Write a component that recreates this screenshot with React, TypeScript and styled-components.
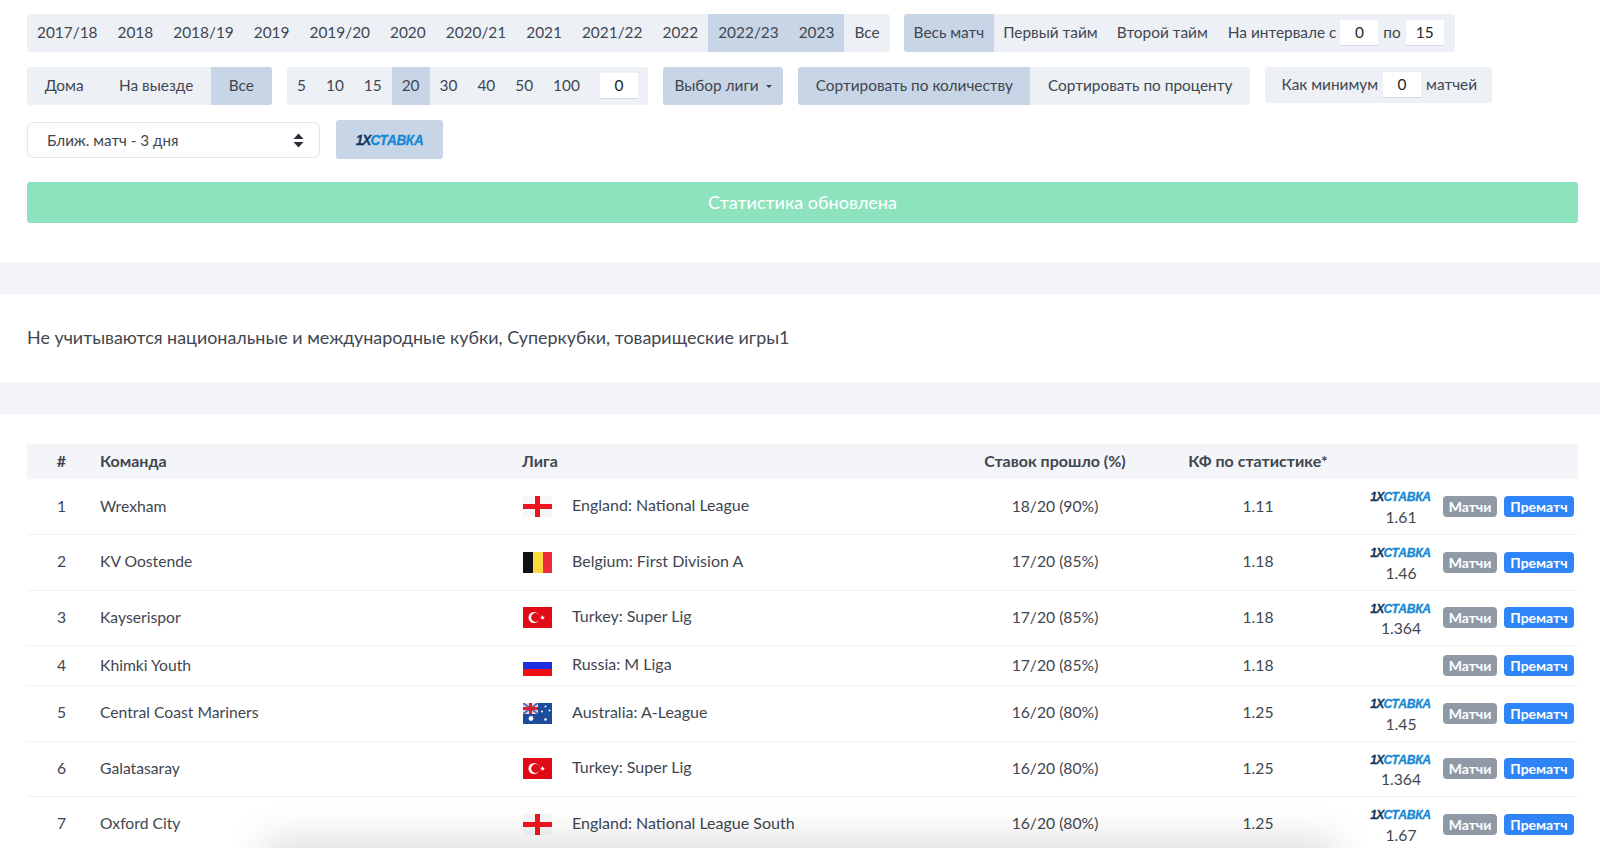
import React from 'react';
import styled, { createGlobalStyle } from 'styled-components';

const Global = createGlobalStyle`
  html, body {
    margin: 0;
    height: 848px;
    overflow: hidden;
    background: #fff;
  }
  body {
    font-family: Lato, "Noto Sans", sans-serif;
    font-size: 15.4px;
    color: #3f4650;
  }
`;

const Page = styled.div`
  padding: 14px 22px 0 27px;
`;
const Row = styled.div<{ $gap?: number }>`
  display: flex;
  align-items: flex-start;
  gap: ${p => p.$gap ?? 15}px;
  margin-bottom: 15px;
`;
const Group = styled.div<{ $low?: boolean }>`
  display: flex;
  align-items: center;
  height: ${p => (p.$low ? 36 : 38)}px;
  background: #edf1f6;
  border-radius: 3px;
  overflow: hidden;
`;
const Item = styled.span<{ $on?: boolean; $pad?: number }>`
  display: flex;
  align-items: center;
  box-sizing: border-box;
  height: 100%;
  padding: 0 ${p => p.$pad ?? 10}px 2px;
  background: ${p => (p.$on ? '#c8d5e6' : 'transparent')};
  white-space: nowrap;
`;
const Label = styled.span<{ $left?: number; $right?: number }>`
  margin-left: ${p => p.$left ?? 0}px;
  margin-right: ${p => p.$right ?? 0}px;
  padding-bottom: 2px;
  white-space: nowrap;
`;
const NumInput = styled.span`
  display: flex;
  align-items: center;
  justify-content: center;
  flex: none;
  box-sizing: border-box;
  width: 38px;
  height: 26px;
  padding-bottom: 1px;
  background: #fff;
  border-bottom: 1px solid #d6dae0;
  color: #22262c;
`;
const Dropdown = styled.button`
  display: flex;
  align-items: center;
  gap: 7px;
  height: 38px;
  padding: 0 11px 2px;
  border: 0;
  border-radius: 3px;
  background: #c8d5e6;
  font: inherit;
  color: inherit;
  &::after {
    content: '';
    margin-top: 2px;
    border-top: 3.5px solid #3f4650;
    border-left: 3px solid transparent;
    border-right: 3px solid transparent;
  }
`;
const Select = styled.div`
  display: flex;
  align-items: center;
  justify-content: space-between;
  box-sizing: border-box;
  width: 293px;
  height: 36px;
  margin-top: 2px;
  padding: 0 15px 0 19px;
  border: 1px solid #e3e6ea;
  border-radius: 6px;
  font-size: 15.2px;
`;
const LogoButton = styled.div`
  display: flex;
  align-items: center;
  justify-content: center;
  width: 107px;
  height: 39px;
  border-radius: 3px;
  background: #c8d5e6;
`;
const Logo = styled.span<{ $size?: number }>`
  display: inline-block;
  font-family: "Liberation Sans", Arial, sans-serif;
  font-size: ${p => p.$size ?? 13.5}px;
  line-height: 1;
  font-weight: 700;
  font-style: italic;
  letter-spacing: -0.3px;
  color: #1388d4;
  white-space: nowrap;
  transform: scaleX(0.9);
  -webkit-text-stroke: 0.3px currentColor;
  b {
    color: #17375e;
    letter-spacing: -1px;
  }
`;
const Alert = styled.div`
  display: flex;
  align-items: center;
  justify-content: center;
  box-sizing: border-box;
  height: 41px;
  margin-top: 23px;
  padding-bottom: 2px;
  border-radius: 3px;
  background: #8ee3bf;
  color: #fff;
  font-size: 18px;
`;
const Band = styled.div<{ $top?: number }>`
  height: 32px;
  margin: ${p => p.$top ?? 0}px -22px 0 -27px;
  background: #f3f5f9;
`;
const Note = styled.p`
  margin: 0;
  box-sizing: border-box;
  height: 88px;
  padding-bottom: 2px;
  display: flex;
  align-items: center;
  font-size: 17.9px;
`;
const Table = styled.table`
  width: 1551px;
  margin-top: 30px;
  border-collapse: collapse;
  table-layout: fixed;
  th {
    height: 33px;
    padding: 0 0 2px;
    background: #f3f5f9;
    font-weight: 700;
    font-size: 16px;
    text-align: center;
  }
  td {
    padding: 0 0 2px;
    font-size: 15.7px;
    text-align: center;
    border-bottom: 1px solid #edf0f5;
  }
`;
const Tr = styled.tr<{ $short?: boolean }>`
  height: ${p => (p.$short ? 40 : 55.5)}px;
`;
const TeamTh = styled.th`
  && {
    text-align: left;
    padding-left: 4px;
  }
`;
const LeagueTh = styled.th`
  && {
    text-align: left;
  }
`;
const TeamTd = styled.td`
  && {
    text-align: left;
    padding-left: 4px;
  }
`;
const LeagueCell = styled.div`
  display: flex;
  align-items: center;
  gap: 20px;
  padding: 2px 0 0 1px;
  font-size: 16px;
  text-align: left;
  span {
    position: relative;
    top: -2px;
  }
`;
const Actions = styled.div`
  display: flex;
  align-items: center;
  justify-content: flex-end;
  padding: 2px 4px 0 0;
`;
const Odds = styled.div`
  display: flex;
  flex-direction: column;
  align-items: center;
  width: 62px;
  margin-top: 6px;
  margin-right: 11px;
  span:last-child {
    margin-top: 1px;
    line-height: 24px;
  }
`;
const Tag = styled.span<{ $blue?: boolean }>`
  display: flex;
  align-items: center;
  justify-content: center;
  width: ${p => (p.$blue ? 70 : 54)}px;
  height: 21px;
  margin-left: ${p => (p.$blue ? 7 : 0)}px;
  border-radius: 4px;
  background: ${p => (p.$blue ? '#2f85f7' : '#8f9aa6')};
  color: #fff;
  font-size: 14px;
  font-weight: 700;
`;
const BottomShadow = styled.div`
  position: fixed;
  left: 270px;
  right: 270px;
  bottom: -24px;
  height: 24px;
  box-shadow: 0 0 40px 6px rgba(0, 0, 0, 0.16);
`;

const Flag = ({ kind }: { kind: string }) => (
  <svg width="29" height="21" viewBox="0 0 29 21">
    {kind === 'en' && (
      <>
        <rect width="29" height="21" fill="#f5f8f7" />
        <rect x="12" width="5" height="21" fill="#f0141e" />
        <rect y="8" width="29" height="5" fill="#f0141e" />
      </>
    )}
    {kind === 'be' && (
      <>
        <rect width="10" height="21" fill="#111" />
        <rect x="10" width="10" height="21" fill="#fbdc3c" />
        <rect x="20" width="9" height="21" fill="#ef2b3a" />
      </>
    )}
    {kind === 'tr' && (
      <>
        <rect width="29" height="21" fill="#e30a17" />
        <circle cx="11" cy="10.5" r="5.5" fill="#fff" />
        <circle cx="12.6" cy="10.5" r="4.4" fill="#e30a17" />
        <polygon
          points="19.5,8 20.2,9.8 22,9.9 20.6,11 21.1,12.8 19.5,11.8 18,12.8 18.5,11 17,9.9 18.8,9.8"
          fill="#fff"
        />
      </>
    )}
    {kind === 'ru' && (
      <>
        <rect width="29" height="7" fill="#fff" />
        <rect y="7" width="29" height="7" fill="#1c2fe0" />
        <rect y="14" width="29" height="7" fill="#f00f14" />
      </>
    )}
    {kind === 'au' && (
      <>
        <rect width="29" height="21" fill="#1d4c9c" />
        <rect width="15" height="11" fill="#e8dfe6" />
        <path d="M0 0L15 11M15 0L0 11" stroke="#5a6bb0" strokeWidth="2" />
        <rect x="6" width="3" height="11" fill="#d81e2c" />
        <rect y="4" width="15" height="3" fill="#d81e2c" />
        <circle cx="8" cy="15.5" r="2.4" fill="#fff" />
        <circle cx="22.5" cy="3.5" r="1" fill="#fff" />
        <circle cx="26.5" cy="7.5" r="1" fill="#fff" />
        <circle cx="19" cy="8.5" r="1" fill="#fff" />
        <circle cx="22.5" cy="16.5" r="1.3" fill="#fff" />
      </>
    )}
  </svg>
);

const Carets = () => (
  <svg width="11" height="15" viewBox="0 0 11 15">
    <path d="M5.5 0.5L10.5 6H0.5Z" fill="#2b2f36" />
    <path d="M5.5 14.5L0.5 9H10.5Z" fill="#2b2f36" />
  </svg>
);

const BetLogo = ({ size }: { size?: number }) => (
  <Logo $size={size}>
    <b>1X</b>СТАВКА
  </Logo>
);

const seasons = [
  '2017/18', '2018', '2018/19', '2019', '2019/20', '2020', '2020/21', '2021',
  '2021/22', '2022', '2022/23', '2023', 'Все',
];
const counts = ['5', '10', '15', '20', '30', '40', '50', '100'];

interface TeamRow {
  team: string;
  flag: string;
  league: string;
  bets: string;
  kf: string;
  odds?: string;
}

const rows: TeamRow[] = [
  { team: 'Wrexham', flag: 'en', league: 'England: National League', bets: '18/20 (90%)', kf: '1.11', odds: '1.61' },
  { team: 'KV Oostende', flag: 'be', league: 'Belgium: First Division A', bets: '17/20 (85%)', kf: '1.18', odds: '1.46' },
  { team: 'Kayserispor', flag: 'tr', league: 'Turkey: Super Lig', bets: '17/20 (85%)', kf: '1.18', odds: '1.364' },
  { team: 'Khimki Youth', flag: 'ru', league: 'Russia: M Liga', bets: '17/20 (85%)', kf: '1.18' },
  { team: 'Central Coast Mariners', flag: 'au', league: 'Australia: A-League', bets: '16/20 (80%)', kf: '1.25', odds: '1.45' },
  { team: 'Galatasaray', flag: 'tr', league: 'Turkey: Super Lig', bets: '16/20 (80%)', kf: '1.25', odds: '1.364' },
  { team: 'Oxford City', flag: 'en', league: 'England: National League South', bets: '16/20 (80%)', kf: '1.25', odds: '1.67' },
];

const App: React.FC = () => (
  <Page>
    <Global />
    <Row $gap={14}>
      <Group>
        {seasons.map(s => (
          <Item key={s} $on={s === '2022/23' || s === '2023'}>{s}</Item>
        ))}
      </Group>
      <Group>
        <Item $on>Весь матч</Item>
        <Item $pad={9}>Первый тайм</Item>
        <Item>Второй тайм</Item>
        <Label $left={10} $right={4}>На интервале с</Label>
        <NumInput>0</NumInput>
        <Label $left={5} $right={5}>по</Label>
        <NumInput>15</NumInput>
        <Label $right={11} />
      </Group>
    </Row>
    <Row $gap={15.5}>
      <Group>
        <Item $pad={17.7}>Дома</Item>
        <Item $pad={17.7}>На выезде</Item>
        <Item $pad={17.7} $on>Все</Item>
      </Group>
      <Group>
        {counts.map(c => (
          <Item key={c} $on={c === '20'}>{c}</Item>
        ))}
        <Label $left={10} />
        <NumInput>0</NumInput>
        <Label $right={10} />
      </Group>
      <Dropdown>Выбор лиги</Dropdown>
      <Group>
        <Item $pad={17.5} $on>Сортировать по количеству</Item>
        <Item $pad={17.5}>Сортировать по проценту</Item>
      </Group>
      <Group $low>
        <Label $left={16} $right={5}>Как минимум</Label>
        <NumInput>0</NumInput>
        <Label $left={5} $right={15}>матчей</Label>
      </Group>
    </Row>
    <Row $gap={16}>
      <Select>
        Ближ. матч - 3 дня
        <Carets />
      </Select>
      <LogoButton>
        <BetLogo size={15} />
      </LogoButton>
    </Row>
    <Alert>Статистика обновлена</Alert>
    <Band $top={39} />
    <Note>Не учитываются национальные и международные кубки, Суперкубки, товарищеские игры1</Note>
    <Band />
    <Table>
      <colgroup>
        <col width={69} />
        <col width={426} />
        <col width={428} />
        <col width={210} />
        <col width={196} />
        <col width={222} />
      </colgroup>
      <thead>
        <tr>
          <th>#</th>
          <TeamTh>Команда</TeamTh>
          <LeagueTh>Лига</LeagueTh>
          <th>Ставок прошло (%)</th>
          <th>КФ по статистике*</th>
          <th />
        </tr>
      </thead>
      <tbody>
        {rows.map((r, i) => (
          <Tr key={r.team} $short={!r.odds}>
            <td>{i + 1}</td>
            <TeamTd>{r.team}</TeamTd>
            <td>
              <LeagueCell>
                <Flag kind={r.flag} />
                <span>{r.league}</span>
              </LeagueCell>
            </td>
            <td>{r.bets}</td>
            <td>{r.kf}</td>
            <td>
              <Actions>
                {r.odds && (
                  <Odds>
                    <BetLogo />
                    <span>{r.odds}</span>
                  </Odds>
                )}
                <Tag>Матчи</Tag>
                <Tag $blue>Прематч</Tag>
              </Actions>
            </td>
          </Tr>
        ))}
      </tbody>
    </Table>
    <BottomShadow />
  </Page>
);

export default App;
